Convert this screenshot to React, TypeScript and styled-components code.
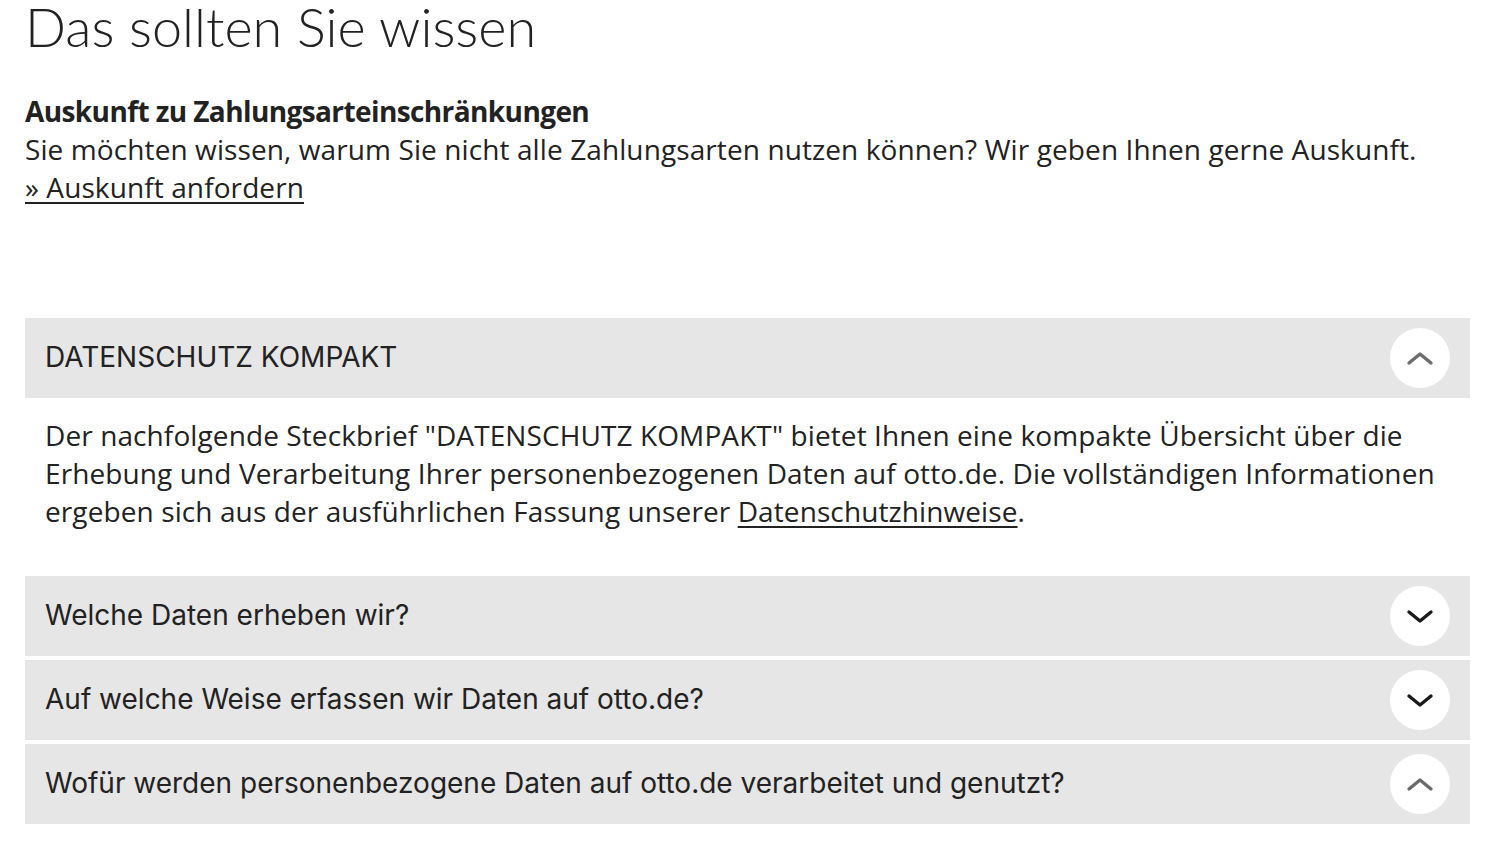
import { useState } from "react";
import styled, { createGlobalStyle } from "styled-components";

const GlobalStyle = createGlobalStyle`
  body {
    margin: 0;
    background: #fff;
    color: #222;
    font-family: "Open Sans", "Noto Sans", sans-serif;
  }
`

const Page = styled.div`
  padding: 0 38px 0 25px;
`

const Title = styled.h1`
  margin: -3px 0 0;
  font-family: Lato, sans-serif;
  font-weight: 300;
  font-size: 54px;
  line-height: 60px;
  color: #222;
`

const InfoBlock = styled.section`
  margin-top: 35px;
  font-size: 28px;
  line-height: 38px;
  letter-spacing: 0.1px;
`

const InfoHeading = styled.h2`
  margin: 0;
  font-size: 28px;
  line-height: 38px;
  font-weight: 700;
  letter-spacing: -0.6px;
`

const InfoText = styled.p`
  margin: 0;
`

const Link = styled.a`
  color: #222;
  text-decoration: underline;
  text-underline-offset: 4px;
  text-decoration-thickness: 1.5px;
`

const Accordion = styled.div`
  margin-top: 112px;
  display: flex;
  flex-direction: column;
  gap: 4px;
`

const Header = styled.button`
  display: flex;
  align-items: center;
  justify-content: space-between;
  width: 100%;
  height: 80px;
  padding: 0 20px;
  border: 0;
  background: #e6e6e6;
  cursor: pointer;
  text-align: left;
  font-family: Inter, Lato, sans-serif;
  font-size: 28px;
  color: #222;
`

const HeaderTitle = styled.span`
  margin-top: -3px;
`

const CircleButton = styled.span`
  display: flex;
  align-items: center;
  justify-content: center;
  width: 60px;
  height: 60px;
  border-radius: 50%;
  background: #fff;
  flex-shrink: 0;
`

const Content = styled.div`
  padding: 18px 20px 42px;
  font-size: 28px;
  line-height: 38px;
  letter-spacing: 0.1px;
`

type Item = { title: string; open: boolean; body?: React.ReactNode }

const items: Item[] = [
  {
    title: "DATENSCHUTZ KOMPAKT",
    open: true,
    body: (
      <>
        Der nachfolgende Steckbrief "DATENSCHUTZ KOMPAKT" bietet Ihnen eine kompakte Übersicht über die
        Erhebung und Verarbeitung Ihrer personenbezogenen Daten auf otto.de. Die vollständigen Informationen
        ergeben sich aus der ausführlichen Fassung unserer <Link href="#">Datenschutzhinweise</Link>.
      </>
    ),
  },
  { title: "Welche Daten erheben wir?", open: false },
  { title: "Auf welche Weise erfassen wir Daten auf otto.de?", open: false },
  { title: "Wofür werden personenbezogene Daten auf otto.de verarbeitet und genutzt?", open: true },
]

function Chevron({ up }: { up: boolean }) {
  return (
    <svg width="28" height="16" viewBox="0 0 28 16" fill="none">
      <path
        d={up ? "M3 13 L14 4 L25 13" : "M3 4 L14 13 L25 4"}
        stroke={up ? "#6b6b6b" : "#1a1a1a"}
        strokeWidth="3.4"
        strokeLinecap="round"
        strokeLinejoin="round"
      />
    </svg>
  )
}

function AccordionItem({ item }: { item: Item }) {
  const [open, setOpen] = useState(item.open)
  return (
    <div>
      <Header onClick={() => setOpen(!open)} aria-expanded={open}>
        <HeaderTitle>{item.title}</HeaderTitle>
        <CircleButton>
          <Chevron up={open} />
        </CircleButton>
      </Header>
      {open && item.body && <Content>{item.body}</Content>}
    </div>
  )
}

export default function App() {
  return (
    <Page>
      <GlobalStyle />
      <Title>Das sollten Sie wissen</Title>
      <InfoBlock>
        <InfoHeading>Auskunft zu Zahlungsarteinschränkungen</InfoHeading>
        <InfoText>Sie möchten wissen, warum Sie nicht alle Zahlungsarten nutzen können? Wir geben Ihnen gerne Auskunft.</InfoText>
        <Link href="#">» Auskunft anfordern</Link>
      </InfoBlock>
      <Accordion>
        {items.map((item) => (
          <AccordionItem key={item.title} item={item} />
        ))}
      </Accordion>
    </Page>
  )
}
